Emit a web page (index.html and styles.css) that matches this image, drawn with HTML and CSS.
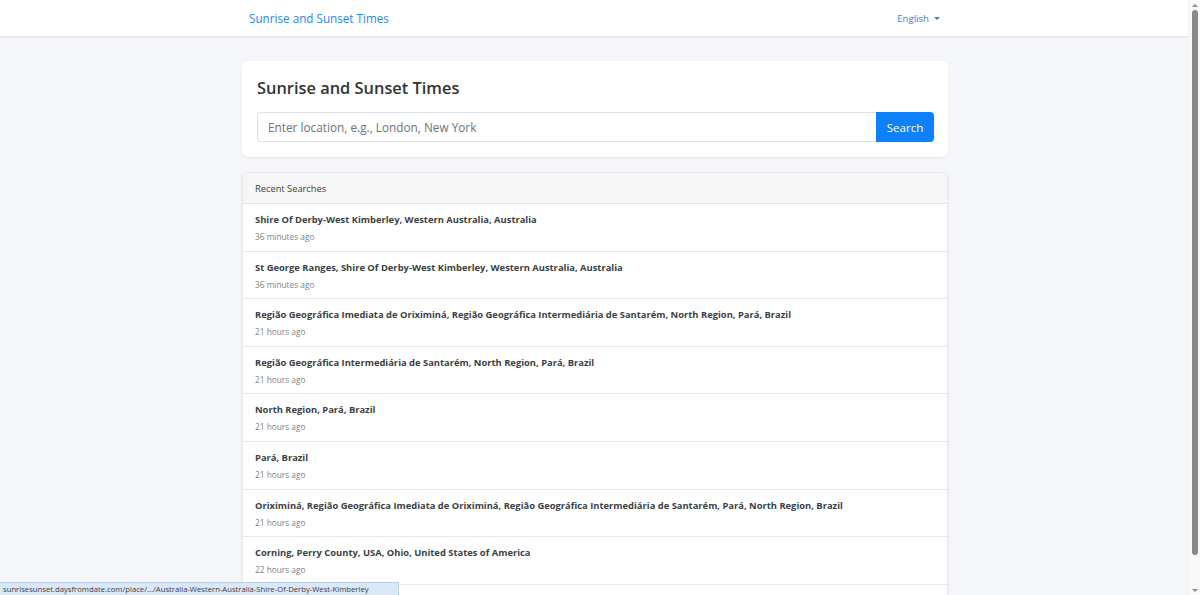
FILE: index.html
```html
<!DOCTYPE html>
<html lang="en">
<head>
<meta charset="utf-8">
<title>Sunrise and Sunset Times</title>
<link rel="stylesheet" href="styles.css">
</head>
<body>
<nav class="navbar">
  <div class="nav-inner">
    <a class="brand" href="#">Sunrise and Sunset Times</a>
    <a class="lang" href="#">English <span class="caret"></span></a>
  </div>
</nav>
<main class="main">
  <section class="card search-card">
    <h1 class="title">Sunrise and Sunset Times</h1>
    <form class="input-group">
      <input class="input" type="text" placeholder="Enter location, e.g., London, New York">
      <button class="btn" type="button">Search</button>
    </form>
  </section>
  <section class="card list-card">
    <div class="card-header">Recent Searches</div>
    <ul class="list">
      <li class="item"><div class="place">Shire Of Derby-West Kimberley, Western Australia, Australia</div><div class="time">36 minutes ago</div></li>
      <li class="item"><div class="place">St George Ranges, Shire Of Derby-West Kimberley, Western Australia, Australia</div><div class="time">36 minutes ago</div></li>
      <li class="item"><div class="place">Região Geográfica Imediata de Oriximiná, Região Geográfica Intermediária de Santarém, North Region, Pará, Brazil</div><div class="time">21 hours ago</div></li>
      <li class="item"><div class="place">Região Geográfica Intermediária de Santarém, North Region, Pará, Brazil</div><div class="time">21 hours ago</div></li>
      <li class="item"><div class="place">North Region, Pará, Brazil</div><div class="time">21 hours ago</div></li>
      <li class="item"><div class="place">Pará, Brazil</div><div class="time">21 hours ago</div></li>
      <li class="item"><div class="place">Oriximiná, Região Geográfica Imediata de Oriximiná, Região Geográfica Intermediária de Santarém, Pará, North Region, Brazil</div><div class="time">21 hours ago</div></li>
      <li class="item"><div class="place">Corning, Perry County, USA, Ohio, United States of America</div><div class="time">22 hours ago</div></li>
      <li class="item"><div class="place">Perry County, USA, Ohio, United States of America</div><div class="time">22 hours ago</div></li>
    </ul>
  </section>
</main>
<div class="status">sunrisesunset.daysfromdate.com/place/.../Australia-Western-Australia-Shire-Of-Derby-West-Kimberley</div>
<div class="scrollbar" aria-hidden="true">
  <span class="arrow-up"></span>
  <span class="thumb"></span>
  <span class="arrow-down"></span>
</div>
</body>
</html>
```

FILE: styles.css
```css
body {
  margin: 0;
  padding-right: 10px;
  background: #f4f6f9;
  font-family: "Open Sans", "Liberation Sans", sans-serif;
  color: #333;
}
a { text-decoration: none; }
.navbar {
  background: #fff;
  height: 36px;
  border-bottom: 1px solid #e6e8eb;
  box-shadow: 0 1px 2px rgba(0,0,0,0.04);
}
.nav-inner {
  width: 692px;
  margin: 0 auto;
  height: 100%;
  display: flex;
  align-items: center;
  justify-content: space-between;
}
.brand { color: #2a85e8; font-size: 11.7px; }
.lang { color: #2a85e8; font-size: 9.6px; display: flex; align-items: center; gap: 5px; margin-right: 1px; }
.caret { width: 0; height: 0; border-left: 3px solid transparent; border-right: 3px solid transparent; border-top: 3px solid #2a85e8; }
.main {
  width: 706px;
  margin: 0 auto;
  padding: 24px 0 8px;
  display: flex;
  flex-direction: column;
  gap: 15px;
}
.card {
  background: #fff;
  border-radius: 6px;
  box-shadow: 0 1px 3px rgba(0,0,0,0.07);
}
.search-card { padding: 14px 14px 15px 15px; }
.title { margin: 0 0 11px; font-size: 16.4px; font-weight: 600; color: #333; line-height: 26px; }
.input-group { display: flex; height: 30px; }
.input {
  flex: 1;
  border: 1px solid #dcdfe3;
  border-right: none;
  border-radius: 4px 0 0 4px;
  padding: 0 10px;
  font-family: inherit;
  font-size: 11.8px;
  color: #555;
  outline: none;
}
.input::placeholder { color: #6c737a; }
.btn {
  width: 58px;
  background: #0d80fb;
  color: #fff;
  border: none;
  border-radius: 0 4px 4px 0;
  font-family: inherit;
  font-size: 11.6px;
}
.list-card { border: 1px solid #eaeaea; overflow: hidden; }
.card-header {
  background: #f6f6f6;
  height: 30px;
  display: flex;
  align-items: center;
  padding-left: 12px;
  font-size: 9.3px;
  color: #454545;
  border-bottom: 1px solid #e4e4e4;
}
.list { list-style: none; margin: 0; padding: 0; }
.item {
  padding: 9px 12px 7.6px;
  border-bottom: 1px solid #e8e8e8;
}
.place { font-size: 9.4px; font-weight: 700; color: #3a3f44; line-height: 14px; }
.time { font-size: 8.3px; color: #7b8187; line-height: 12px; margin-top: 4px; }
.status {
  position: fixed;
  left: 0;
  bottom: 0;
  width: 395px;
  height: 12px;
  padding-left: 3px;
  background: #dce8f8;
  border: 1px solid #b8cde9;
  border-left: none;
  border-bottom: none;
  font-size: 7.7px;
  line-height: 12px;
  color: #3c3c3c;
  white-space: nowrap;
  overflow: hidden;
}
.scrollbar {
  position: fixed;
  top: 0;
  right: 0;
  width: 12px;
  height: 100%;
  background: #f9f9f9;
  border-left: 1px solid #efefef;
  box-sizing: border-box;
  display: flex;
  flex-direction: column;
  align-items: center;
  padding: 4px 0 3px;
}
.arrow-up { width: 0; height: 0; border-left: 3px solid transparent; border-right: 3px solid transparent; border-bottom: 3px solid #8a8a8a; }
.arrow-down { width: 0; height: 0; border-left: 3px solid transparent; border-right: 3px solid transparent; border-top: 3px solid #8a8a8a; margin-top: auto; }
.thumb { width: 6px; height: 545px; margin-top: 3px; background: #898989; border-radius: 3px; }
```
